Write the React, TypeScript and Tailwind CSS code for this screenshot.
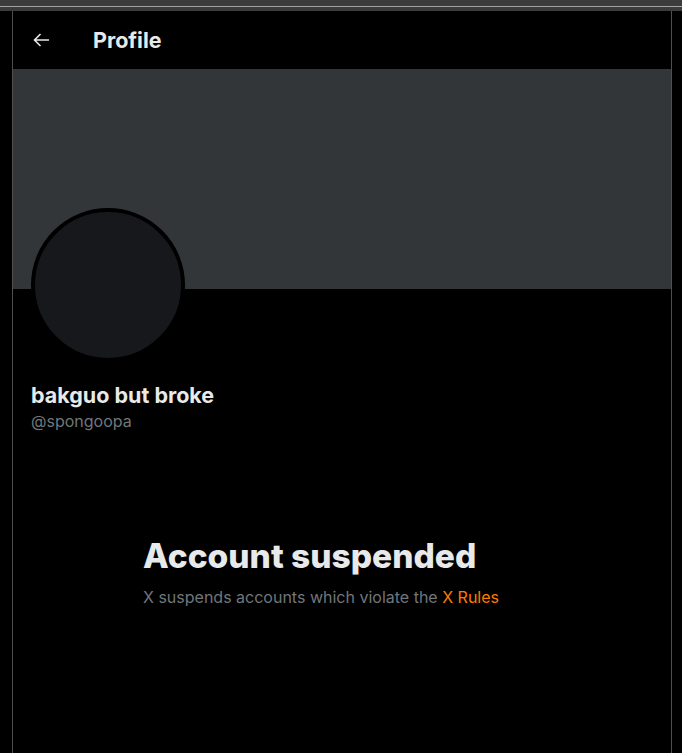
export default function App() {
  return (
    <div className="flex h-[753px] w-[682px] flex-col overflow-hidden bg-black font-['Inter',sans-serif] text-[#e7e9ea]">
      {/* window chrome strip */}
      <div className="flex h-[11px] flex-col bg-[#3c3c3c]">
        <div className="h-[6px]" />
        <div className="h-px bg-[#a3a3a3]" />
      </div>

      <div className="flex flex-1">
        <div className="w-[12px]" />
        <main className="flex w-[660px] flex-col border-x border-[#4f4f4f]">
          {/* HEADER */}
          <header className="flex h-[58px] items-center">
            <button className="ml-[10px] flex h-[36px] w-[36px] items-center justify-center">
              <svg width="17" height="14" viewBox="0 0 17 14" fill="none">
                <path
                  d="M16 7H1.5M7.5 1L1.5 7l6 6"
                  stroke="currentColor"
                  strokeWidth="1.6"
                />
              </svg>
            </button>
            <h1 className="ml-[34px] text-[21.5px] font-bold leading-6">Profile</h1>
          </header>

          {/* BANNER */}
          <div className="h-[220px] bg-[#333639]" />

          {/* AVATAR + NAME */}
          <div className="px-[18px]">
            <div className="-mt-[81px] h-[154px] w-[154px] rounded-full border-4 border-black bg-[#16181c]" />
            <div className="mt-[21px]">
              <p className="text-[21.5px] font-bold leading-6">bakguo but broke</p>
              <p className="mt-[4px] text-[16px] leading-5 text-[#71767b]">@spongoopa</p>
            </div>
          </div>

          {/* SUSPENDED */}
          <div className="mx-auto mt-[107px] w-[400px] pl-[1px]">
            <h2 className="text-[33.5px] font-extrabold leading-9">Account suspended</h2>
            <p className="mt-[13px] text-[16px] leading-5 text-[#71767b]">
              X suspends accounts which violate the{" "}
              <span className="text-[#ff7a00]">X Rules</span>
            </p>
          </div>
        </main>
      </div>
    </div>
  );
}
